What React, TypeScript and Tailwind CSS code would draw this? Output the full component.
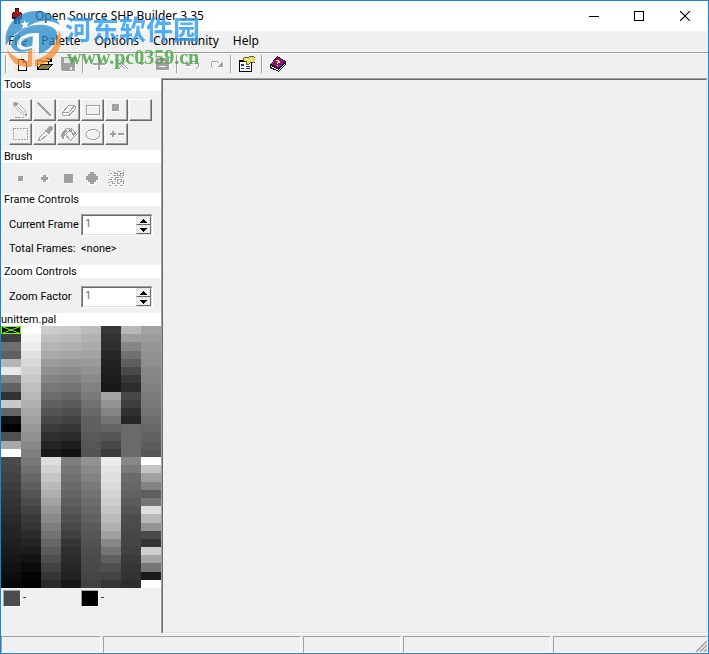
import React from "react";

// greyscale levels, one string per palette column, two hex digits per entry
const PALETTE_COLUMNS = [
  "003f705fb5e8856232c866120050a8ff4b46423d3834302b26241f1b17120d08",
  "fef4ece0d8d0c8c0b8b0a8a0989088807870665e544c423a342b241c130b0300",
  "ccc0b4a99c9084786c6054483b2f2418ded2c6b9aea2968a7e73665a4e423529",
  "c9bcb0a5988c8074675b4f43372b1e117d76706a645e574f4840362f2a262217",
  "bcb2aaa39a928a827a7168605e5a5652928a837a726c66605a56524e4b494642",
  "37322e27221f1c18a49484746456483cece4dfdad4cec4bab0a0887460504436",
  "b89e86705e4a382c483e30266a6a6a6a887a6a66625c544c4a4644403a36322e",
  "a29c96928e8884807c78746e68625c56ffc4a0825e76deb8944a36d0a4761aff",
];

const paletteColors = PALETTE_COLUMNS.flatMap((column) => column.match(/../g) ?? []);

interface IconProps {
  children?: React.ReactNode;
  disabled?: boolean;
}

function Icon({ children, disabled = false }: IconProps) {
  return (
    <svg
      viewBox="0 0 16 16"
      shapeRendering="crispEdges"
      fill="none"
      aria-hidden="true"
      className={disabled ? "h-4 w-4 shrink-0 text-[#a0a0a0] drop-shadow-[1px_1px_0_#ffffff]" : "h-4 w-4 shrink-0"}
    >
      {children}
    </svg>
  );
}

function ToolbarButton({ label, disabled, children }: IconProps & { label: string }) {
  return (
    <button type="button" aria-label={label} disabled={disabled} className="flex h-5 w-[23px] items-center justify-center">
      <Icon disabled={disabled}>{children}</Icon>
    </button>
  );
}

function Separator() {
  return <div className="mx-[3px] h-[18px] w-[2px] border-l border-r border-l-[#a0a0a0] border-r-white" />;
}

function SectionHeader({ children }: { children: React.ReactNode }) {
  return <h2 className="h-[13px] bg-white pl-[3px] leading-[14px]">{children}</h2>;
}

const tools = [
  {
    label: "Pencil",
    icon: (
      <g>
        <path d="M1 0h3v1h1v2H4v1H1V3H0V1h1z" fill="currentColor" />
        <path d="M1.500 3.500l8 8.500 4 1-1-4-8-8M4 4l7 7" stroke="currentColor" strokeWidth=".8" />
        <path d="M12 12h2v2h-2zM2 15h6v1H2zM9 15h2v1H9z" fill="currentColor" />
      </g>
    ),
  },
  { label: "Line", icon: <path d="M1 1l13 13" stroke="currentColor" strokeWidth="1.500" /> },
  {
    label: "Eraser",
    icon: <path d="M7.500 3.500h6l1 1v2l-6 7h-6l-1-1v-2zM1.500 10.500h6l6-6.500M8.500 10.500v2" stroke="currentColor" />,
  },
  { label: "Rectangle", icon: <path d="M1.500 3.500h13v9h-13z" stroke="currentColor" /> },
  { label: "Filled Rectangle", icon: <path d="M3 2h7v7H3z" fill="currentColor" /> },
  { label: "Tool", icon: null },
  {
    label: "Select",
    icon: <path d="M.5 2.500h14v11H.5z" stroke="currentColor" strokeDasharray="2 1" />,
  },
  {
    label: "Color Picker",
    icon: (
      <g>
        <path d="M10 2h1V1h1V0h3v1h1v3h-1v1h-1v1h-1v2h-2V7h-1V6H9V5H8V4h2z" fill="currentColor" />
        <path d="M8.500 5.500l-6 6v2h-1v1h2l7-6" stroke="currentColor" />
      </g>
    ),
  },
  {
    label: "Fill",
    icon: (
      <g>
        <path d="M3 4h3v2H5v1H4v3H3v3H1v-2H0V8h1V6h1V5h1z" fill="currentColor" />
        <path d="M4.500 8.500l6-6 5 6-6 6zM4 4l2-2h2l2 4" stroke="currentColor" />
        <path d="M8 5l3-3 4 5-3 3z" fill="currentColor" />
        <path d="M9 6l2 3M11 4l2 3" stroke="#fff" />
      </g>
    ),
  },
  { label: "Ellipse", icon: <ellipse cx="8" cy="8.500" rx="7" ry="5" stroke="currentColor" /> },
  { label: "Lighten or Darken", icon: <path d="M1 7h6v2H1zM3 5h2v6H3zM9 7h6v2H9z" fill="currentColor" /> },
];

const brushes = [
  { label: "Small square", icon: <path d="M6 6h5v5H6z" fill="currentColor" /> },
  { label: "Small cross", icon: <path d="M7 5h3v2h2v3h-2v2H7v-2H5V7h2z" fill="currentColor" /> },
  { label: "Large square", icon: <path d="M4 4h9v9H4z" fill="currentColor" /> },
  {
    label: "Round",
    icon: <path d="M6 2h4v2h2v2h2v4h-2v2h-2v2H6v-2H4v-2H2V6h2V4h2z" fill="currentColor" />,
  },
  {
    label: "Spray",
    icon: (
      <path
        d="M1 .5h1M5 1.500h1M9 1.500h4M15 .5h1M2 3.500h2M7 3.500h2M12 3.500h3M0 5.500h1M5 5.500h3M10 5.500h2M14 5.500h2M3 7.500h2M8 7.500h3M13 7.500h2M1 9.500h3M6 9.500h2M10 9.500h3M3 11.500h2M7 11.500h1M12 11.500h2M0 12.500h2M5 13.500h2M9 13.500h3M1 15.500h2M7 15.500h2M12 15.500h3M6.500 2v2M9.500 3v3M12.500 4v3M15.500 2v4M7.500 7v2M9.500 9v4M13.500 9v2M4.500 11v3M15.500 10v4"
        stroke="currentColor"
      />
    ),
  },
];

function NumberField({ id, label }: { id: string; label: string }) {
  return (
    <div className="flex items-center pl-2">
      <label htmlFor={id} className="w-[72px]">
        {label}
      </label>
      <div className="flex h-[22px] w-[72px] border border-b-white border-l-[#a0a0a0] border-r-white border-t-[#a0a0a0]">
        <div className="flex flex-1 border border-b-[#e3e3e3] border-l-[#696969] border-r-[#e3e3e3] border-t-[#696969] bg-white">
          <input
            id={id}
            type="text"
            defaultValue="1"
            disabled
            className="w-0 min-w-0 flex-1 bg-white pb-[2px] pl-[2px] text-[#6d6d6d]"
          />
          <div className="flex w-[15px] flex-col">
            <SpinButton label={`Increase ${label}`} path="M3 0h1v1h1v1h1v1h1v1H0V3h1V2h1V1h1z" />
            <SpinButton label={`Decrease ${label}`} path="M0 0h7v1H6v1H5v1H4v1H3V3H2V2H1V1H0z" />
          </div>
        </div>
      </div>
    </div>
  );
}

function SpinButton({ label, path }: { label: string; path: string }) {
  return (
    <button
      type="button"
      aria-label={label}
      className="flex flex-1 items-center justify-center border border-b-[#696969] border-l-[#e3e3e3] border-r-[#696969] border-t-[#e3e3e3] bg-[#f0f0f0]"
    >
      <svg viewBox="0 0 7 4" className="h-1 w-[7px]" shapeRendering="crispEdges" aria-hidden="true">
        <path d={path} fill="#000" />
      </svg>
    </button>
  );
}

function TitleBar() {
  return (
    <header className="flex h-[30px] items-center bg-white pb-px pl-2">
      <svg viewBox="0 0 16 16" shapeRendering="crispEdges" className="h-4 w-4" aria-hidden="true">
        <path d="M6 0h4v4h2v1h1v6h-2v5H9v-4H8v4H5v-5H3V5h1V4h2z" fill="#25152b" />
        <path d="M7 1h2v3H7z" fill="#9b1515" />
        <path d="M5 4h6v5H5zM4 5h1v4H4zM11 5h1v4h-1z" fill="#b10f19" />
        <path d="M6 10h2v5H6zM9 10h1v5H9z" fill="#343475" />
      </svg>
      <h1 className="ml-[10px] flex-1 font-['Noto_Sans',sans-serif] text-[12px] leading-4">Open Source SHP Builder 3.35</h1>
      <button type="button" aria-label="Minimize" className="flex h-[29px] w-[45px] items-center justify-center">
        <svg viewBox="0 0 10 10" className="h-[10px] w-[10px]" shapeRendering="crispEdges">
          <path d="M0 5.500h10" stroke="#000" />
        </svg>
      </button>
      <button type="button" aria-label="Maximize" className="flex h-[29px] w-[45px] items-center justify-center">
        <svg viewBox="0 0 10 10" className="h-[10px] w-[10px]" shapeRendering="crispEdges">
          <path d="M.5.5h9v9h-9z" stroke="#000" fill="none" />
        </svg>
      </button>
      <button type="button" aria-label="Close" className="flex h-[29px] w-[47px] items-center justify-center">
        <svg viewBox="0 0 10 10" className="h-[10px] w-[10px]">
          <path d="M0 0l10 10M10 0L0 10" stroke="#000" strokeWidth="1.200" />
        </svg>
      </button>
    </header>
  );
}

function Toolbar() {
  return (
    <div className="flex h-[25px] items-center pb-[3px] pl-px">
      <Separator />
      <ToolbarButton label="New">
        <path d="M1 2h2v2H1zM7 0h1v3H7zM1 11h2v2H1zM0 7h3v1H0zM14 14h1v1h-1zM5 14h1v2H5z" fill="#f4e66a" />
        <path d="M4.500 3.500h5l3 3v8h-8z" fill="#fff" stroke="#000" />
        <path d="M9.500 3.500v3h3" stroke="#000" />
      </ToolbarButton>
      <ToolbarButton label="Open">
        <path d="M1 5h3l1 1h6v3H5l-4 4z" fill="#f5ed9a" />
        <path d="M.5 13.500v-9h4l1 1h6v3M9 2.500h3l2 2M14.500 2v3h-3" stroke="#000" />
        <path d="M4 8.500h11l-4 5H.5z" fill="#85803a" stroke="#000" />
      </ToolbarButton>
      <ToolbarButton label="Save" disabled>
        <path d="M1 1h14v14H2l-1-1z" fill="currentColor" />
        <path d="M4 2h8v5H4zM10 11h2v3h-2z" fill="#e3e3e3" />
        <path d="M4 7h8" stroke="currentColor" />
      </ToolbarButton>
      <Separator />
      <ToolbarButton label="Add Frame" disabled>
        <path d="M7 2h2v5h5v2H9v5H7V9H2V7h5z" fill="currentColor" />
      </ToolbarButton>
      <ToolbarButton label="Delete Frame" disabled>
        <path d="M1 3l10 10M4 3l10 10M11 3L1 13M14 3L4 13" stroke="currentColor" />
      </ToolbarButton>
      <button type="button" aria-label="More" disabled className="flex h-5 w-[17px] items-center justify-center">
        <Icon disabled>
          <path d="M5 6h6v1h-1v1H9v1H7V8H6V7H5z" fill="currentColor" />
        </Icon>
      </button>
      <ToolbarButton label="Preview" disabled>
        <path d="M2 2h13v12H2z" fill="currentColor" />
        <path d="M5 5.500h7M5 10.500h7" stroke="#efefef" />
      </ToolbarButton>
      <Separator />
      <ToolbarButton label="Undo" disabled>
        <path d="M5 7l2-2h4l2 2v4l-2 2" stroke="currentColor" />
        <path d="M1 5l6 5H1z" fill="currentColor" />
      </ToolbarButton>
      <ToolbarButton label="Redo" disabled>
        <path d="M11 7L9 5H5L3 7v3l2 2" stroke="currentColor" />
        <path d="M15 5v6H9z" fill="currentColor" />
      </ToolbarButton>
      <Separator />
      <ToolbarButton label="Preferences">
        <path d="M.5 4.500h12v11H.5z" fill="#fff" stroke="#000" />
        <path d="M0 4h6v2H0z" fill="#000" />
        <path d="M2 8h3v2H2zM2 12h3v1H2zM7 10h4v1H7zM7 12h4v1H7z" fill="#2929a3" />
        <path d="M4 3l2-2h4l1-1h3l2 2v4h-4l-3 3-2-1 1-2-4-1z" fill="#e7dc61" stroke="#292910" strokeWidth=".7" />
        <path d="M7 2l3 3M6 3l3 3M12 2v3" stroke="#fff9a1" />
      </ToolbarButton>
      <Separator />
      <ToolbarButton label="Help">
        <path d="M0 9l7-9 9 5v3l-7 8-9-4z" fill="#180b18" />
        <path d="M1 8l6-7 8 4-6 7z" fill="#8c138e" />
        <path d="M1 10l8 4 6-7v1l-6 7-8-4z" fill="#fff" />
        <path d="M6 4h3v1h1v2H8v1H7V6h1V5H6zM7 9h1v1H7z" fill="#ffe923" />
      </ToolbarButton>
    </div>
  );
}

function Swatch({ color }: { color: string }) {
  return (
    <div className="flex w-[78px] gap-[2px] pl-[2px]">
      <div
        className="h-[17px] w-[18px] border border-b-white border-l-[#a0a0a0] border-r-white border-t-[#a0a0a0]"
        style={{ backgroundColor: color }}
      />
      <span className="leading-[15px]">-</span>
    </div>
  );
}

function Sidebar() {
  return (
    <aside className="w-[160px] shrink-0">
      <SectionHeader>Tools</SectionHeader>
      <div className="flex flex-wrap gap-x-px gap-y-[2px] pb-[5px] pl-2 pt-2">
        {tools.map((tool) => (
          <button
            key={tool.label}
            type="button"
            aria-label={tool.label}
            disabled
            className="flex h-[22px] w-[23px] items-center justify-center border border-b-[#696969] border-l-white border-r-[#696969] border-t-white shadow-[inset_-1px_-1px_0_#a0a0a0]"
          >
            <Icon disabled>{tool.icon}</Icon>
          </button>
        ))}
      </div>
      <SectionHeader>Brush</SectionHeader>
      <div className="flex h-[30px] items-center pl-[7px]">
        {brushes.map((brush) => (
          <button
            key={brush.label}
            type="button"
            aria-label={brush.label}
            disabled
            className="flex h-6 w-6 items-center justify-center"
          >
            <Icon disabled>{brush.icon}</Icon>
          </button>
        ))}
      </div>
      <SectionHeader>Frame Controls</SectionHeader>
      <div className="h-[59px] pt-2">
        <NumberField id="current-frame" label="Current Frame" />
        <div className="flex pl-2 pt-[6px] leading-[14px]">
          <span className="w-[72px]">Total Frames:</span>
          <span>&lt;none&gt;</span>
        </div>
      </div>
      <SectionHeader>Zoom Controls</SectionHeader>
      <div className="h-[35px] pt-2">
        <NumberField id="zoom-factor" label="Zoom Factor" />
      </div>
      <div className="h-[13px] bg-white leading-[14px]">unittem.pal</div>
      <div className="grid h-[262px] grid-flow-col grid-cols-8 grid-rows-[repeat(32,minmax(0,1fr))]">
        {paletteColors.map((level, i) => (
          <div key={i} className="overflow-hidden" style={{ backgroundColor: `#${level}${level}${level}` }}>
            {i === 0 && (
              <svg viewBox="0 0 20 8" className="h-2 w-5" fill="none" aria-hidden="true">
                <path d="M.5.5h19v7H.5zM2 1l16 6M18 1L2 7" stroke="#7dff00" />
              </svg>
            )}
          </div>
        ))}
      </div>
      <div className="flex pt-[2px]">
        <Swatch color="#4b4b4b" />
        <Swatch color="#000000" />
      </div>
    </aside>
  );
}

function StatusBar() {
  const panel = "border border-b-white border-l-[#a0a0a0] border-r-white border-t-[#a0a0a0]";
  return (
    <footer className="mt-[2px] flex h-[17px] gap-[2px]">
      <div className={`w-[100px] shrink-0 ${panel}`} />
      <div className={`w-[198px] shrink-0 ${panel}`} />
      <div className={`w-[98px] shrink-0 ${panel}`} />
      <div className={`w-[148px] shrink-0 ${panel}`} />
      <div className={`flex flex-1 items-end justify-end ${panel}`}>
        <svg viewBox="0 0 12 12" className="h-3 w-3" aria-hidden="true">
          <path d="M1 12L12 1M5 12l7-7M9 12l3-3" stroke="#a0a0a0" strokeWidth="1.500" />
        </svg>
      </div>
    </footer>
  );
}

function Watermark() {
  return (
    <div className="pointer-events-none absolute left-1 top-[9px] flex">
      <svg viewBox="0 0 60 60" className="h-[60px] w-[60px] opacity-75" aria-hidden="true">
        <path d="M54 20C60 34 53 50 32 56l-9 1V39h7v11c12-3 21-12 24-30z" fill="#f48a33" />
        <path d="M2 39c2 11 9 18 21 18v-6C14 50 7 46 2 39z" fill="#f48a33" />
        <path d="M1 36C-2 17 11 2 30 1c12 0 21 6 25 14-10-6-22-5-31 1C13 21 5 27 1 36z" fill="#2388cc" />
        <path d="M6 35c2-10 12-19 25-20 9-1 18 1 21 7 1 8-6 18-18 22V23h-6v15c-6 5-20 6-22-3z" fill="#2388cc" />
        <path d="M12 35c0-7 7-11 16-12v14c-6 4-15 4-16-2z" fill="#fff" />
        <path d="M16 34c1-4 6-7 12-8v9c-5 3-11 3-12-1z" fill="#2388cc" />
        <path d="M28 23h6v21l-4 1v12h-3V38z" fill="#fff" opacity=".7" />
        <path d="M19 10l2 3 3-1-2 3 1 3-3-1-3 2 1-3-2-3h3z" fill="#fff" />
      </svg>
      <div className="whitespace-nowrap opacity-80">
        <div className="h-[37px] font-['Noto_Sans_CJK_SC',sans-serif] text-[27px] font-bold leading-[38px] text-[#299af3]">
          河东软件园
        </div>
        <div className="pl-[2px] font-['Liberation_Serif',serif] text-[20px] font-bold leading-5 text-[#3fa43b]">
          www.pc0359.cn
        </div>
      </div>
    </div>
  );
}

export default function App() {
  return (
    <div className="relative flex min-h-screen flex-col border border-[#1883d7] bg-[#f0f0f0] font-['Roboto',sans-serif] text-[11px] text-black">
      <TitleBar />
      <nav className="flex h-[22px] items-center border-b border-b-[#a0a0a0] pb-[2px] font-['Noto_Sans',sans-serif] text-[12px] shadow-[0_1px_0_#ffffff]">
        {["File", "Palette", "Options", "Community", "Help"].map((item) => (
          <button key={item} type="button" className="px-[7px]">
            {item}
          </button>
        ))}
      </nav>
      <Toolbar />
      <div className="flex flex-1">
        <Sidebar />
        <main className="flex flex-1 border border-b-white border-l-[#a0a0a0] border-r-white border-t-[#a0a0a0]">
          <div className="flex-1 border border-b-[#e3e3e3] border-l-[#696969] border-r-[#e3e3e3] border-t-[#696969]" />
        </main>
      </div>
      <StatusBar />
      <Watermark />
    </div>
  );
}
